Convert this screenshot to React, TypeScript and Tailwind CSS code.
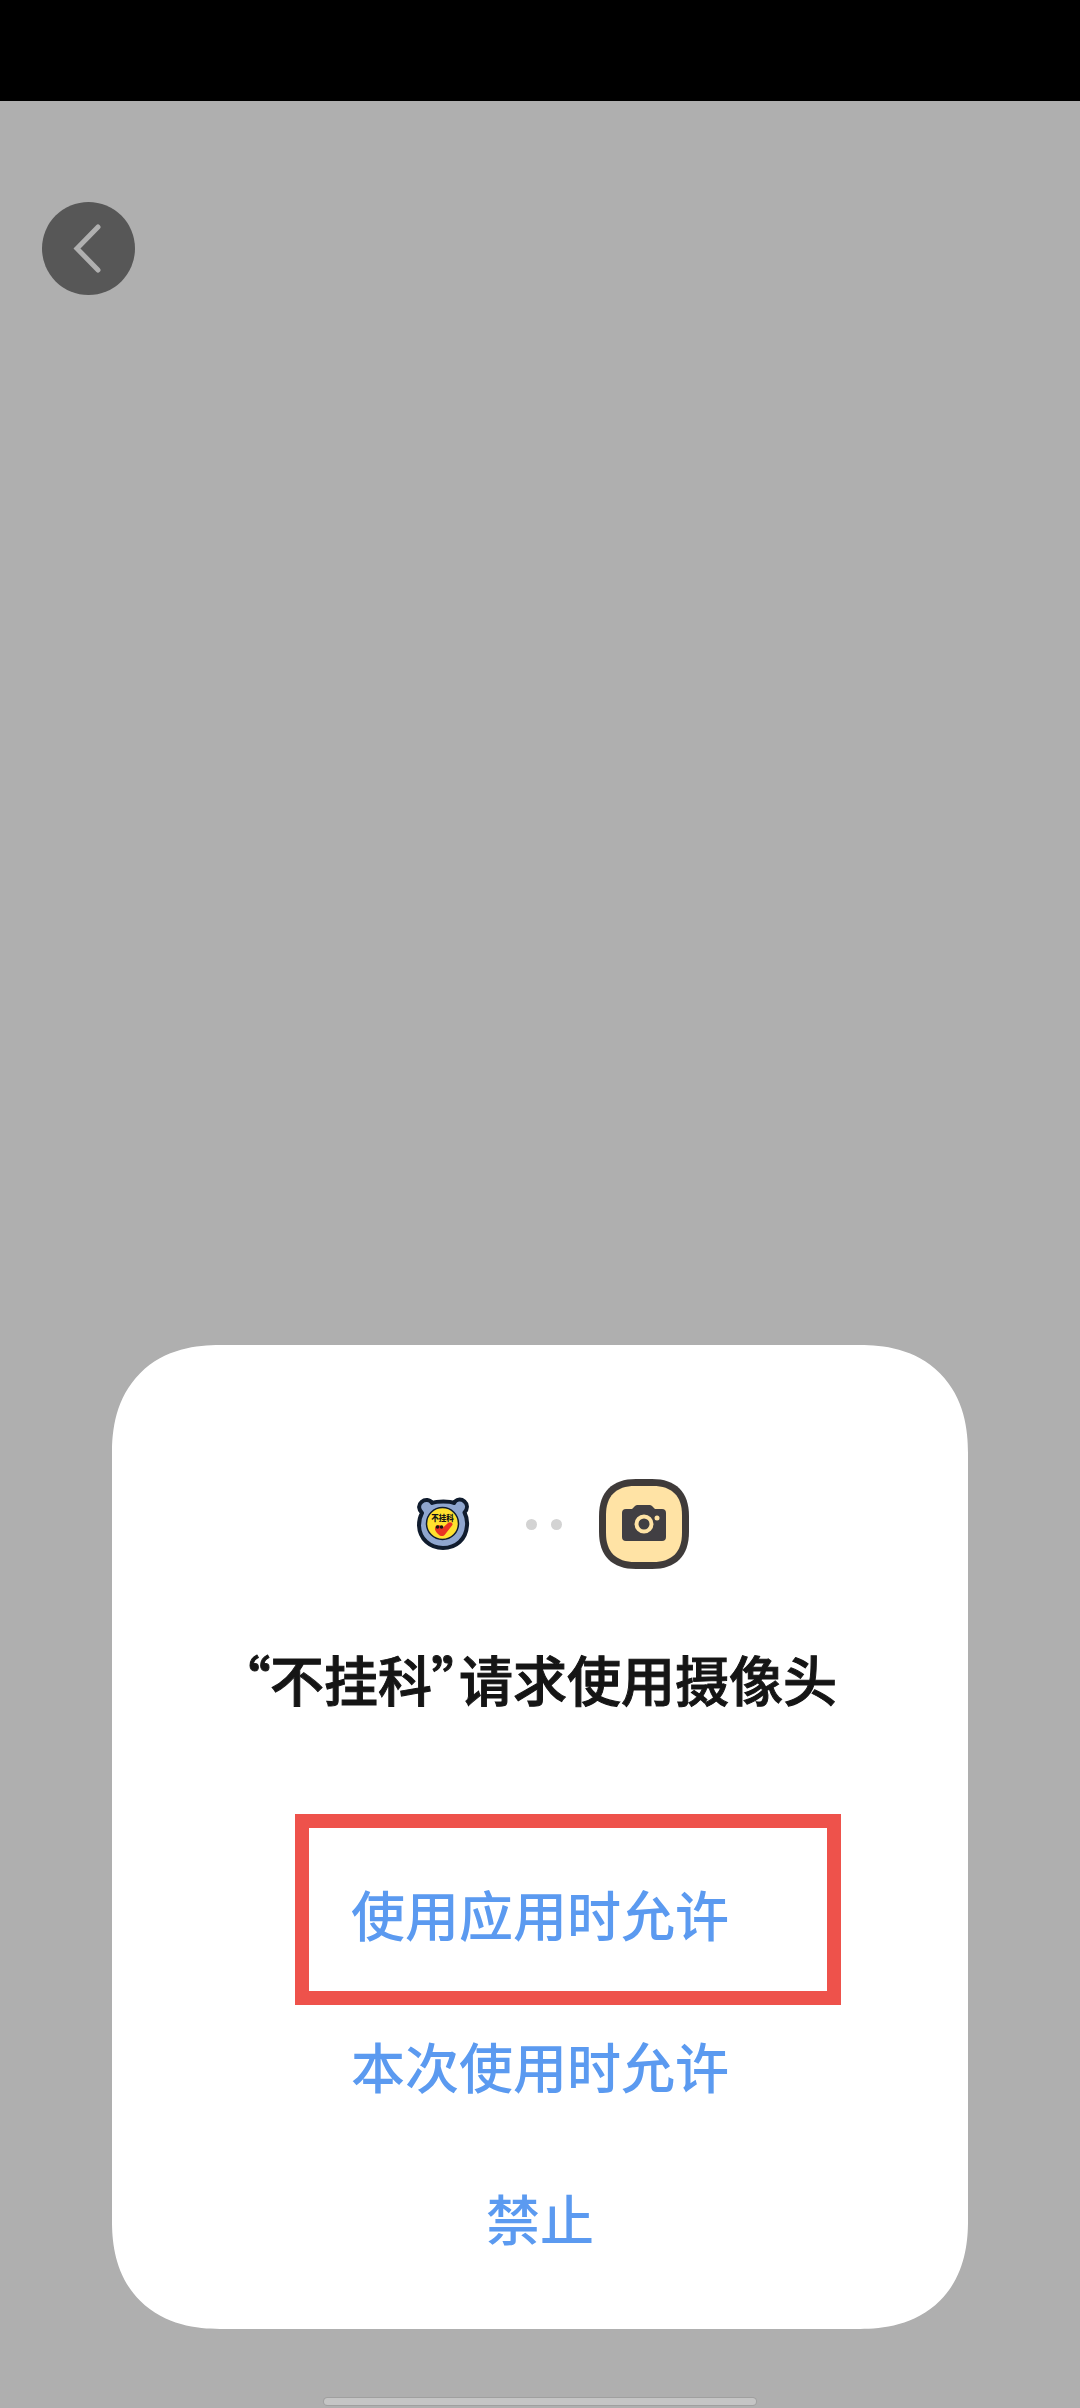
function BearLogo() {
  return (
    <svg viewBox="0 0 90 90" className="h-[90px] w-[90px]" role="img" aria-label="不挂科">
      <path
        d="M33 24C38 22 51 22 55 24C57 20 62 19.500 65.500 22.500C69 25.500 68.500 30 65.500 33.500C67.500 37.500 68.500 41.500 68 46.500C67 60.500 57 69 44 69C31 69 20.500 60 20 46.500C20 41.500 21 37.500 23 34C19.500 30.500 19 26 22.500 23C26 20 31 20.500 33 24Z"
        fill="#8fa6cf"
        stroke="#101c2e"
        strokeWidth="4"
        strokeLinejoin="round"
      />
      <circle cx="43.500" cy="44.500" r="16" fill="#ffe12e" stroke="#101c2e" strokeWidth="1.500" />
      <text
        x="43.500"
        y="42"
        textAnchor="middle"
        fontSize="7.500"
        fontWeight="900"
        fill="#151515"
        fontFamily="'Noto Sans CJK SC', sans-serif"
      >
        不挂科
      </text>
      <path
        d="M37 47C39 45 42 46 43.500 49L49 44C51 42 55 44 53 46.500L46 55.500C44 58 41 57.500 38.500 54.500C36 52 35 49 37 47Z"
        fill="#e93223"
      />
      <circle cx="38.500" cy="48" r="1.800" fill="#151515" />
      <circle cx="42.500" cy="48" r="1.800" fill="#151515" />
    </svg>
  );
}

function CameraIcon() {
  return (
    <svg viewBox="0 0 90 90" className="h-[90px] w-[90px]" role="img" aria-label="摄像头">
      <path
        d="M45 0H53C77 0 90 13 90 37V53C90 77 77 90 53 90H37C13 90 0 77 0 53V37C0 13 13 0 37 0Z"
        fill="#3f3b3a"
      />
      <path
        d="M45 7H54C73 7 83 17 83 36V54C83 73 73 83 54 83H36C17 83 7 73 7 54V36C7 17 17 7 36 7Z"
        fill="#ffe3a5"
      />
      <path
        d="M27 30H33L36 27Q37 26 38.500 26H50.500Q52 26 53 27L56 30H63Q67 30 67 34V58Q67 62 63 62H27Q23 62 23 58V34Q23 30 27 30Z"
        fill="#413f43"
      />
      <circle cx="45" cy="45" r="7.500" fill="#413f43" stroke="#ffe3a5" strokeWidth="4" />
      <circle cx="58" cy="39" r="2.500" fill="#ffe3a5" />
    </svg>
  );
}

const choiceClass = "h-[152px] w-full pb-1 text-[54px] leading-[72px] font-medium text-[#5b9af0]";

export default function App() {
  return (
    <div className="flex min-h-screen flex-col bg-[#afafaf] font-['Noto_Sans_CJK_SC',sans-serif]">
      <div className="h-[101px] bg-black" />
      <header className="px-[42px] pt-[101px]">
        <button
          type="button"
          aria-label="返回"
          className="flex h-[93px] w-[93px] items-center justify-center rounded-full bg-[#575757]"
        >
          <svg viewBox="0 0 93 93" className="h-full w-full" fill="none" stroke="#b0b0b0" strokeWidth="5" strokeLinecap="round">
            <path d="M56 25L35 46.500L56 68" />
          </svg>
        </button>
      </header>

      <main
        role="dialog"
        aria-labelledby="permission-title"
        className="mx-28 mt-auto rounded-[94px] bg-white pt-[134px] pb-[33px] supports-[corner-shape:squircle]:rounded-[108px] supports-[corner-shape:squircle]:[corner-shape:superellipse(1.2)]"
      >
        <div className="flex items-center justify-center gap-[37px] pl-2">
          <BearLogo />
          <div className="flex gap-[14px]">
            <span className="h-[11px] w-[11px] rounded-full bg-[#d3d3d3]" />
            <span className="h-[11px] w-[11px] rounded-full bg-[#d3d3d3]" />
          </div>
          <CameraIcon />
        </div>
        <h1
          id="permission-title"
          lang="zh-CN"
          className="mt-[74px] text-center text-[54px] leading-[72px] font-medium text-[#151515] [-webkit-text-stroke:1px_#151515] [font-feature-settings:'palt']"
        >
          “不挂科”请求使用摄像头
        </h1>
        <div lang="zh-CN" className="mt-[125px] flex flex-col">
          <div className="relative">
            <button type="button" className={choiceClass}>
              使用应用时允许
            </button>
            <div className="pointer-events-none absolute -top-[26px] right-[127px] left-[183px] h-[191px] border-[14px] border-[#ee524b]" />
          </div>
          <button type="button" className={choiceClass}>
            本次使用时允许
          </button>
          <button type="button" className={choiceClass}>
            禁止
          </button>
        </div>
      </main>

      <footer className="flex justify-center pt-[69px] pb-[3px]">
        <div className="h-[7px] w-2/5 rounded-full bg-[#c5c5c5] ring-1 ring-[#a0a0a0]" />
      </footer>
    </div>
  );
}
